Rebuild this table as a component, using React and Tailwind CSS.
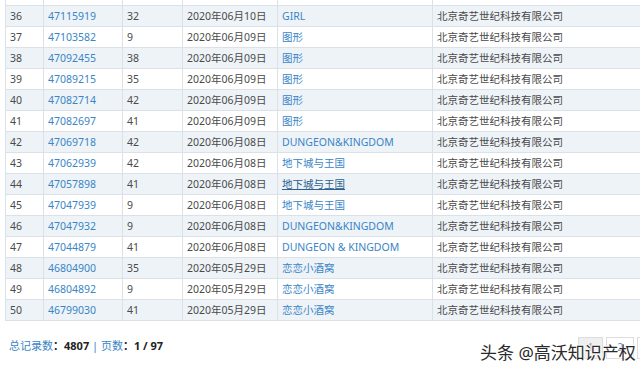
import React from "react";

const rows = [
  ["36", "47115919", "32", "2020年06月10日", "GIRL"],
  ["37", "47103582", "9", "2020年06月09日", "图形"],
  ["38", "47092455", "38", "2020年06月09日", "图形"],
  ["39", "47089215", "35", "2020年06月09日", "图形"],
  ["40", "47082714", "42", "2020年06月09日", "图形"],
  ["41", "47082697", "41", "2020年06月09日", "图形"],
  ["42", "47069718", "42", "2020年06月08日", "DUNGEON&KINGDOM"],
  ["43", "47062939", "42", "2020年06月08日", "地下城与王国"],
  ["44", "47057898", "41", "2020年06月08日", "地下城与王国", true],
  ["45", "47047939", "9", "2020年06月08日", "地下城与王国"],
  ["46", "47047932", "9", "2020年06月08日", "DUNGEON&KINGDOM"],
  ["47", "47044879", "41", "2020年06月08日", "DUNGEON & KINGDOM"],
  ["48", "46804900", "35", "2020年05月29日", "恋恋小酒窝"],
  ["49", "46804892", "9", "2020年05月29日", "恋恋小酒窝"],
  ["50", "46799030", "41", "2020年05月29日", "恋恋小酒窝"],
];

const font = { fontFamily: '"Noto Sans", "Noto Sans CJK SC", sans-serif' };

export default function App() {
  return (
    <div className="relative w-[640px] h-[375px] overflow-hidden bg-white text-[10.5px] text-[#4a4a4a]" style={font}>
      <div className="pl-[5px] w-[760px]">
        <table className="border-collapse table-fixed w-[740px]">
          <colgroup>
            <col className="w-[38px]" />
            <col className="w-[79px]" />
            <col className="w-[60px]" />
            <col className="w-[95px]" />
            <col className="w-[155px]" />
            <col />
          </colgroup>
          <tbody>
            <tr className="h-[5px]">
              {[0, 1, 2, 3, 4, 5].map((i) => (
                <td key={i} className="border-x border-b border-[#dbe1e7] p-0" />
              ))}
            </tr>
            {rows.map((r, i) => (
              <tr key={r[0]} className={i % 2 === 0 ? "h-[21px] bg-[#eef3f8]" : "h-[21px] bg-white"}>
                <td className="border border-[#dbe1e7] pl-[4px] py-0 leading-[20px]">{r[0]}</td>
                <td className="border border-[#dbe1e7] pl-[4px] py-0 leading-[20px] text-[#3a85c6]">{r[1]}</td>
                <td className="border border-[#dbe1e7] pl-[4px] py-0 leading-[20px]">{r[2]}</td>
                <td className="border border-[#dbe1e7] pl-[4px] py-0 leading-[20px]">{r[3]}</td>
                <td className="border border-[#dbe1e7] pl-[4px] py-0 leading-[20px] text-[#3a85c6]">
                  <span className={r[5] ? "underline text-[#2d5f8f]" : ""}>{r[4]}</span>
                </td>
                <td className="border border-[#dbe1e7] pl-[4px] py-0 leading-[20px]">北京奇艺世纪科技有限公司</td>
              </tr>
            ))}
          </tbody>
        </table>
      </div>
      <div className="flex items-start justify-between mt-[16px] pl-[9px]">
        <div className="mt-[1px] text-[11px]">
          <span className="text-[#3a85c6]">总记录数</span>
          <span className="font-bold text-[#222]">：4807</span>
          <span className="text-[#3a85c6]"> | 页数</span>
          <span className="font-bold text-[#222]">：1 / 97</span>
        </div>
        <div className="flex gap-[3px] -mr-[25px] text-[10px] leading-none">
          <div className="w-[25px] h-[22px] pt-[4px] flex justify-center bg-[#efefef] border border-[#dddddd] text-[#999]">1</div>
          <div className="w-[28px] h-[22px] pt-[4px] flex justify-center border border-[#dddddd] text-[#3a85c6]">2</div>
          <div className="w-[28px] h-[22px] pt-[4px] flex justify-center border border-[#dddddd] text-[#3a85c6]">3</div>
        </div>
      </div>
      <div
        className="absolute left-[480px] top-[340px] text-[17px] text-[#2a2a2a] whitespace-nowrap"
        style={{ textShadow: "0 0 2px #fff, 0 0 2px #fff, 0 0 3px #fff" }}
      >
        头条 @高沃知识产权
      </div>
    </div>
  );
}
